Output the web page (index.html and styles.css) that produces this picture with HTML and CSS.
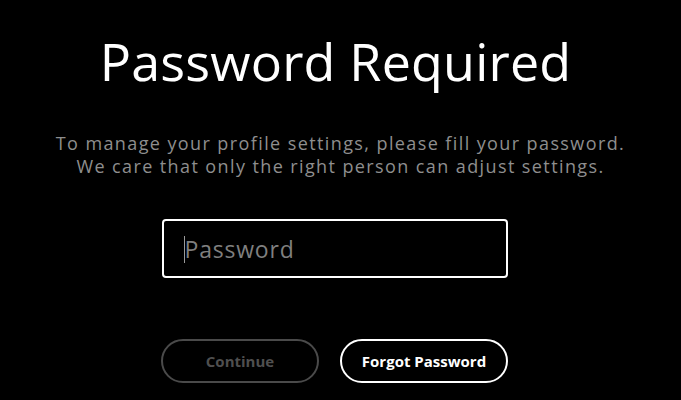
FILE: index.html
```html
<!DOCTYPE html>
<html lang="en">
<head>
<meta charset="utf-8">
<title>Password Required</title>
<link rel="stylesheet" href="styles.css">
</head>
<body>
<main class="page">
  <h1 class="title">Password Required</h1>
  <p class="lead">To manage your profile settings, please fill your password.<br>We care that only the right person can adjust settings.</p>
  <form class="form">
    <div class="field">
      <span class="caret"></span><input class="input" type="password" placeholder="Password">
    </div>
    <div class="actions">
      <button type="button" class="btn btn-disabled">Continue</button>
      <button type="button" class="btn btn-primary">Forgot Password</button>
    </div>
  </form>
</main>
</body>
</html>
```
FILE: styles.css
```css
html, body {
  margin: 0;
  padding: 0;
  background: #000;
  height: 100%;
}
body {
  font-family: "Open Sans", "Liberation Sans", sans-serif;
  color: #fff;
  overflow: hidden;
}
.page {
  display: flex;
  flex-direction: column;
  align-items: center;
}
.title {
  margin: 26px 10px 0 0;
  font-weight: 400;
  font-size: 52px;
  line-height: 70px;
  letter-spacing: 0.2px;
}
.lead {
  margin: 36px 0 0;
  text-align: center;
  color: #8e8e8e;
  font-size: 18px;
  line-height: 23px;
  letter-spacing: 1.4px;
}
.form {
  margin: 41px 12px 0 0;
  display: flex;
  flex-direction: column;
  align-items: center;
}
.field {
  position: relative;
  width: 346px;
  height: 59px;
  box-sizing: border-box;
  border: 2px solid #fff;
  border-radius: 4px;
  display: flex;
  align-items: center;
  padding-left: 21px;
}
.caret {
  position: absolute;
  left: 20px;
  top: 15px;
  width: 1px;
  height: 27px;
  background: #9a9a9a;
}
.input {
  flex: 1;
  min-width: 0;
  background: transparent;
  border: 0;
  outline: 0;
  padding: 0;
  color: #fff;
  font-family: inherit;
  font-size: 23px;
  letter-spacing: 0.8px;
}
.input::placeholder {
  color: #7f7f7f;
}
.actions {
  margin-top: 61px;
  display: flex;
  gap: 21px;
}
.btn {
  height: 44px;
  border-radius: 22px;
  background: transparent;
  font-family: inherit;
  font-weight: 700;
  font-size: 15px;
  padding: 0;
  box-sizing: border-box;
}
.btn-disabled {
  width: 158px;
  border: 2px solid #4a4a4a;
  color: #4f4f4f;
}
.btn-primary {
  width: 168px;
  border: 2px solid #fff;
  color: #fff;
}
```
